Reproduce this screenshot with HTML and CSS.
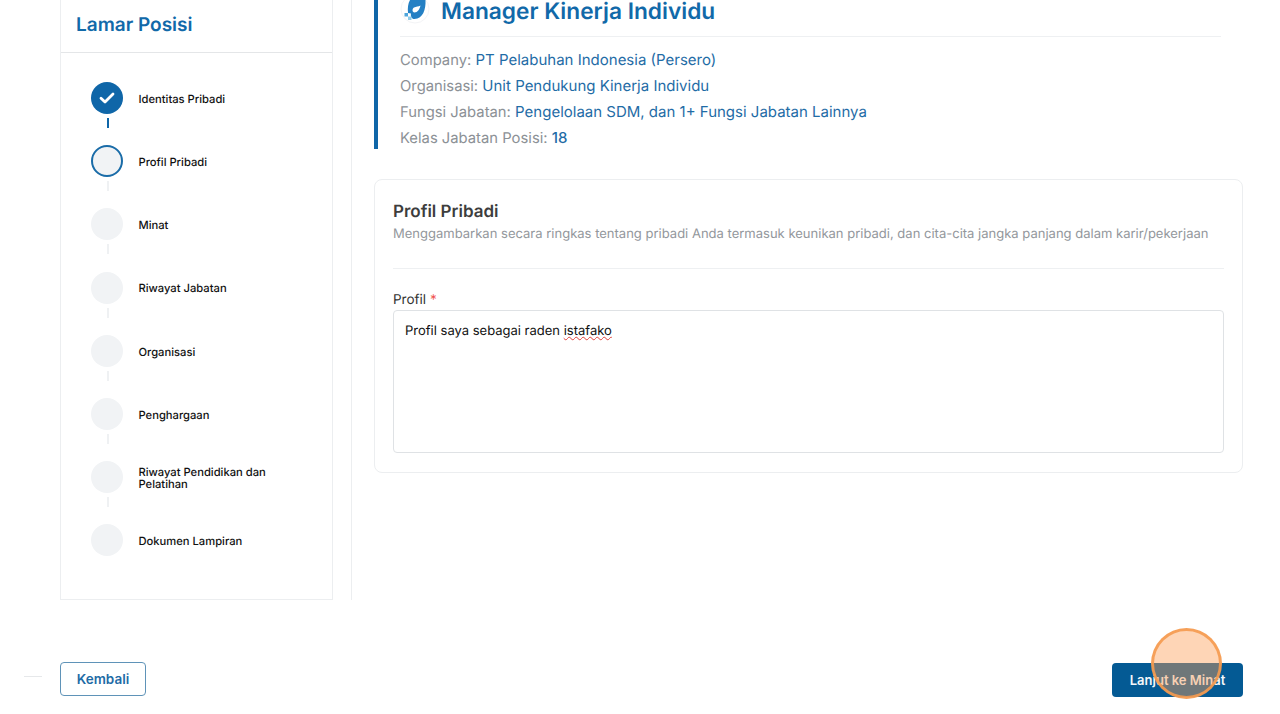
FILE: index.html
```html
<!DOCTYPE html>
<html>
<head>
  <title>Lamar Posisi</title>
  <meta charset="UTF-8">
  <meta name="viewport" content="width=device-width, initial-scale=1.0">
  <link rel="stylesheet" href="styles.css">
</head>
<body>
  <div class="page">
    <div class="columns">
      <aside class="sidebar">
        <h2 class="sidebar-title">Lamar Posisi</h2>
        <ul class="steps">
          <li class="step done">
            <div class="marker">
              <span class="circle">
                <svg width="16" height="12" viewBox="0 0 16 12"><path d="M2 6.2 L6 10 L14 2" fill="none" stroke="#fff" stroke-width="2.8" stroke-linecap="round" stroke-linejoin="round"/></svg>
              </span>
              <span class="line"></span>
            </div>
            <span class="step-label">Identitas Pribadi</span>
          </li>
          <li class="step active">
            <div class="marker"><span class="circle"></span><span class="line"></span></div>
            <span class="step-label">Profil Pribadi</span>
          </li>
          <li class="step">
            <div class="marker"><span class="circle"></span><span class="line"></span></div>
            <span class="step-label">Minat</span>
          </li>
          <li class="step">
            <div class="marker"><span class="circle"></span><span class="line"></span></div>
            <span class="step-label">Riwayat Jabatan</span>
          </li>
          <li class="step">
            <div class="marker"><span class="circle"></span><span class="line"></span></div>
            <span class="step-label">Organisasi</span>
          </li>
          <li class="step">
            <div class="marker"><span class="circle"></span><span class="line"></span></div>
            <span class="step-label">Penghargaan</span>
          </li>
          <li class="step">
            <div class="marker"><span class="circle"></span><span class="line"></span></div>
            <span class="step-label">Riwayat Pendidikan dan<br>Pelatihan</span>
          </li>
          <li class="step">
            <div class="marker"><span class="circle"></span></div>
            <span class="step-label">Dokumen Lampiran</span>
          </li>
        </ul>
      </aside>

      <main class="content">
        <section class="position">
          <div class="position-head">
            <svg class="position-logo" width="32" height="26" viewBox="0 0 32 26">
              <circle cx="15" cy="9" r="14" fill="#fff" stroke="#f3f4f6"/>
              <path fill-rule="evenodd" d="M10 0 L25.500 0 C26 9 23 19 14.500 19 C11.500 19 10.500 16.500 11 13.500 L8 13 C7.500 8 8 3.500 10 0 Z M14 7.500 C12 8.500 12 12.500 14.500 12.500 C17.500 12.500 19.500 9.500 20.500 5.500 C18.500 6.500 16 6.800 14 7.500 Z" fill="#2480c4"/>
              <rect x="4.500" y="13" width="3.500" height="3.500" fill="#4ea6dc"/>
              <rect x="8" y="16.500" width="3.500" height="3.500" fill="#8fcbe9"/>
            </svg>
            <h1 class="position-title">Manager Kinerja Individu</h1>
          </div>
          <p class="info"><span class="info-key">Company:</span> PT Pelabuhan Indonesia (Persero)</p>
          <p class="info"><span class="info-key">Organisasi:</span> Unit Pendukung Kinerja Individu</p>
          <p class="info"><span class="info-key">Fungsi Jabatan:</span> Pengelolaan SDM, dan 1+ Fungsi Jabatan Lainnya</p>
          <p class="info"><span class="info-key">Kelas Jabatan Posisi:</span> <b class="info-num">18</b></p>
        </section>

        <section class="card">
          <h3 class="card-title">Profil Pribadi</h3>
          <p class="card-sub">Menggambarkan secara ringkas tentang pribadi Anda termasuk keunikan pribadi, dan cita-cita jangka panjang dalam karir/pekerjaan</p>
          <hr class="card-rule">
          <label class="field-label">Profil <span class="required">*</span></label>
          <div class="textarea">Profil saya sebagai raden <span class="misspelled">istafako</span></div>
        </section>
      </main>
    </div>

    <footer class="footer">
      <span class="dash"></span>
      <button class="btn btn-outline">Kembali</button>
      <button class="btn btn-primary">Lanjut ke Minat</button>
    </footer>

    <div class="click-spot"></div>
  </div>
</body>
</html>
```

FILE: styles.css
```css
* {
  box-sizing: border-box;
}
body {
  margin: 0;
  background: #fff;
  font-family: Inter, "Liberation Sans", sans-serif;
  color: #111;
  text-rendering: geometricPrecision;
}
.page {
  position: relative;
  width: 1280px;
  height: 714px;
  overflow: hidden;
  padding: 0 37px 0 60px;
}
.columns {
  display: flex;
  height: 600px;
}

/* sidebar */
.sidebar {
  flex: none;
  width: 273px;
  border: 1px solid #eceef0;
  border-top: 0;
}
.sidebar-title {
  margin: 0;
  height: 53px;
  padding: 13px 15px 0;
  border-bottom: 1px solid #e4e6e8;
  font-size: 19px;
  line-height: 23px;
  font-weight: 600;
  color: #1169a9;
}
.steps {
  list-style: none;
  margin: 0;
  padding: 29px 0 0 30px;
}
.step {
  display: flex;
  gap: 15.500px;
  height: 63.200px;
}
.marker {
  display: flex;
  flex-direction: column;
  align-items: center;
  gap: 4px;
  width: 32px;
}
.circle {
  display: flex;
  align-items: center;
  justify-content: center;
  width: 32px;
  height: 32px;
  border-radius: 50%;
  background: #f1f3f5;
}
.line {
  width: 2px;
  height: 10px;
  margin-left: 2px;
  background: #eff1f3;
}
.step-label {
  display: flex;
  align-items: center;
  height: 35px;
  font-size: 11.200px;
  line-height: 11.500px;
  font-weight: 500;
  color: #111;
}
.done .circle {
  background: #0f66a8;
}
.done .line {
  background: #0f66a8;
}
.active .circle {
  border: 2px solid #1a6ca8;
}

/* main column */
.content {
  flex: 1;
  margin-left: 18px;
  padding-left: 22px;
  border-left: 1px solid #eceef0;
}
.position {
  height: 149px;
  padding: 0 22px 0 22px;
  border-left: 4px solid #0f66a8;
}
.position-head {
  display: flex;
  align-items: flex-start;
  gap: 7px;
  height: 37px;
  margin-bottom: 10px;
  padding-bottom: 12px;
  border-bottom: 1px solid #eef0f2;
}
.position-logo {
  flex: none;
}
.position-title {
  margin: 0;
  padding-left: 2px;
  font-size: 22.700px;
  line-height: 23px;
  font-weight: 600;
  color: #1169a9;
}
.info {
  margin: 0;
  font-size: 15px;
  line-height: 26px;
  color: #1f6ca6;
}
.info-key {
  font-size: 14.800px;
  color: #8c9196;
}
.info-num {
  font-weight: 500;
}

/* form card */
.card {
  height: 294px;
  margin-top: 30px;
  padding: 22px 18px 0;
  border: 1px solid #eceef0;
  border-radius: 8px;
}
.card-title {
  margin: 0;
  font-size: 17px;
  line-height: 20px;
  font-weight: 600;
  color: #3d3d3d;
}
.card-sub {
  margin: 3px 0 0;
  font-size: 13.030px;
  line-height: 18px;
  color: #93979c;
  white-space: nowrap;
}
.card-rule {
  margin: 25px 0 0;
  border: 0;
  border-top: 1px solid #eef0f2;
}
.field-label {
  display: block;
  margin-top: 23px;
  font-size: 13.500px;
  line-height: 17px;
  color: #333;
}
.required {
  color: #ef5350;
}
.textarea {
  height: 143px;
  margin-top: 1px;
  padding: 11px 11px;
  border: 1px solid #dfe2e5;
  border-radius: 4px;
  font-size: 13px;
  line-height: 18px;
  color: #111;
}
.misspelled {
  text-decoration: underline wavy #e0413a 1px;
}

/* bottom buttons */
.footer {
  display: flex;
  justify-content: space-between;
  align-items: flex-start;
  margin-top: 62px;
}
.btn {
  font-family: inherit;
  font-weight: 600;
  border-radius: 4px;
}
.btn-outline {
  width: 86px;
  height: 34px;
  font-size: 13.500px;
  background: #fff;
  border: 1px solid #5f93b8;
  color: #1f6ca6;
}
.btn-primary {
  width: 131px;
  height: 34px;
  margin-top: 1px;
  font-size: 13px;
  background: #045a94;
  border: 0;
  color: #f4f7fa;
}
.dash {
  position: absolute;
  left: 24px;
  top: 676px;
  width: 18px;
  height: 1px;
  background: #e6e8ea;
}
.click-spot {
  position: absolute;
  left: 1151px;
  top: 628px;
  width: 71px;
  height: 71px;
  border-radius: 50%;
  background: rgba(253, 158, 85, 0.43);
  border: 3px solid rgba(245, 155, 80, 0.9);
}
```
